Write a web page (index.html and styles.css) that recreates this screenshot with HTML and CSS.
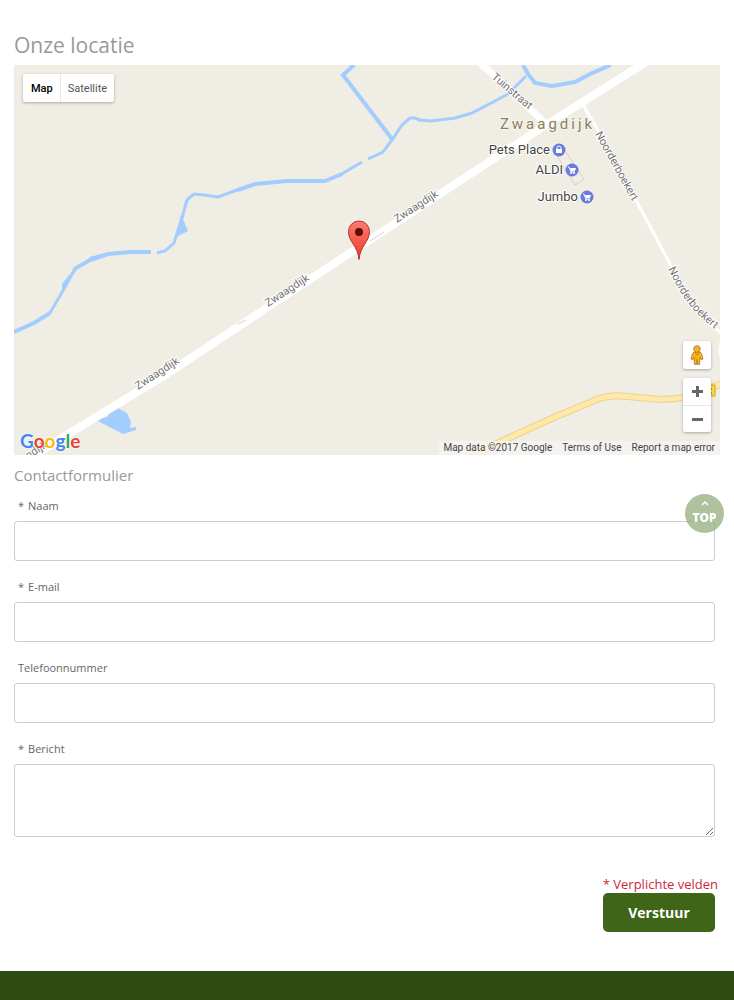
FILE: index.html
```html
<!DOCTYPE html>
<html lang="nl">
<head>
  <meta charset="UTF-8">
  <meta name="viewport" content="width=device-width, initial-scale=1.0">
  <title>Contact</title>
  <link rel="stylesheet" href="styles.css">
</head>
<body>

  <main class="content">
    <h2>Onze locatie</h2>

    <div class="map">
      <svg class="map-canvas" viewBox="14 65 706 390" preserveAspectRatio="xMidYMid slice" role="img" aria-label="Kaart van Zwaagdijk">
        <defs>
          <linearGradient id="pinFill" x1="0" y1="0" x2="0" y2="1">
            <stop offset="0" stop-color="#fc7c70"/>
            <stop offset="1" stop-color="#f0392c"/>
          </linearGradient>
          <path id="noorderCurve" d="M668 269 C679 290 687 308 716 330 L750 354"/>
        </defs>

        <!-- water -->
        <g class="water">
          <path d="M14 332 L34 323 L50 313"/>
          <path class="thin" d="M50 313 L61 294 L75 269"/>
          <path d="M74 270 L76 268 L90 260 L108 254 L130 252 L151 252"/>
          <path class="thin" d="M157 253 L165 251 L174 243 L182 218 L187 200"/>
          <path class="thin" d="M186 203 L188 199 L194 194 L204 195 L218 197 L240 189"/>
          <path d="M238 190 L255 184 L287 181 L325 181 L342 174"/>
          <path class="thin" d="M340 175 L362 162"/>
          <path class="thin" d="M368 159 L383 152 L392 140 L402 125 L410 118 L415 118 L420 120"/>
          <path class="thin" d="M418 120 L431 121 L455 118 L472 113 L495 101 L508 94 L526 76"/>
          <path d="M354 65 L343 75 L392 139"/>
          <path d="M523 65 L528 74 L535 83 L552 86 L575 82 L590 74 L611 65"/>
          <path class="fill" d="M181 214 L188 231 L176 237 Z"/>
          <path class="fill" d="M62 284 L74 269 L62 292 Z"/>
          <path class="fill" d="M89 257 L110 252 L93 261 Z"/>
          <path class="fill" d="M96 420 L107 417 L112 409 L118 408 L127 413 L131 422 L130 428 L136 427 L136 430 L123 434 Z"/>
        </g>

        <!-- roads -->
        <g class="roads">
          <path class="road-main" d="M24 462 L70 433 L165 375 L359 247 L472 173 L546 125 L646 62"/>
          <path class="road-side" d="M478 61 L512 92 L545 123"/>
          <path class="road-small" d="M583 105 L610 151 L646 219 L678 279"/>
          <path class="road-small" d="M678 279 Q692 311 722 334 L720 352 L724 370"/>
          <path class="n-road-edge" d="M470 458 L500 442 L555 417 L598 399 Q610 395 622 396 L655 399 Q676 400 688 396 L726 382"/>
          <path class="n-road" d="M470 458 L500 442 L555 417 L598 399 Q610 395 622 396 L655 399 Q676 400 688 396 L726 382"/>
        </g>
        <path class="building" d="M566 152 L584 179 L575 185 L556 154"/>
        <path class="building" d="M370 241 L384 232 M238 324 L246 320"/>
        <path d="M706 385h9v11h-9z" fill="#ffdc3c" stroke="#c9a61a"/>
        <path d="M711 388v2m0 2v2" stroke="#665500"/>

        <!-- street names -->
        <g class="street">
          <text transform="translate(397 223) rotate(-33)">Zwaagdijk</text>
          <text transform="translate(268 307) rotate(-33)">Zwaagdijk</text>
          <text transform="translate(138 390) rotate(-33)">Zwaagdijk</text>
          <text transform="translate(6 474) rotate(-33)">Zwaagdijk</text>
          <text transform="translate(491 78) rotate(40)">Tuinstraat</text>
          <text transform="translate(595 134) rotate(61)">Noorderboekert</text>
          <text><textPath href="#noorderCurve">Noorderboekert</textPath></text>
        </g>
        <text class="town" x="500" y="129">Zwaagdijk</text>

        <!-- shops -->
        <g class="poi">
          <text x="550" y="154">Pets Place</text>
          <text x="563" y="174">ALDI</text>
          <text x="578" y="201">Jumbo</text>
        </g>
        <g class="poi-icon" transform="translate(559 150)">
          <circle r="6.500"/>
          <path d="M-3 -1h6v4h-6z"/>
          <path class="line" d="M-2 -1v-1a2 2 0 0 1 4 0v1"/>
        </g>
        <g class="poi-icon" transform="translate(572 170)">
          <circle r="6.500"/>
          <path d="M-2 -2h6l-1 3h-4z"/>
          <path class="line" d="M-4 -3h1l2 5h4"/>
          <circle class="wheel" cx="-1" cy="3" r="1"/><circle class="wheel" cx="2" cy="3" r="1"/>
        </g>
        <g class="poi-icon" transform="translate(587 197)">
          <circle r="6.500"/>
          <path d="M-2 -2h6l-1 3h-4z"/>
          <path class="line" d="M-4 -3h1l2 5h4"/>
          <circle class="wheel" cx="-1" cy="3" r="1"/><circle class="wheel" cx="2" cy="3" r="1"/>
        </g>

        <!-- marker -->
        <path d="M359 259.500 C358 246 348.500 242 348.500 231.500 A10.500 10.500 0 0 1 369.500 231.500 C369.500 242 360 246 359 259.500 Z" fill="url(#pinFill)" stroke="#b5342b"/>
        <circle cx="359" cy="232" r="4" fill="#5c0d08"/>
      </svg>

      <div class="map-type">
        <button type="button" class="active">Map</button>
        <button type="button">Satellite</button>
      </div>

      <div class="map-controls">
        <button type="button" class="pegman" aria-label="Street View">
          <svg width="14" height="20" viewBox="0 0 14 20">
            <g fill="#fbb01d" stroke="#a8762a" stroke-width=".8">
              <path d="M4 7h6q2 1 3 7l-2 .5-1-2-.5 7h-2L7 14.500l-.5 5h-2L4 12.500l-1 2L1 14q1-6 3-7z"/>
              <circle cx="7" cy="4" r="3.300"/>
            </g>
            <path d="M5 8l2 2 2-2" fill="none" stroke="#c8821a"/>
          </svg>
        </button>
        <div class="zoom">
          <button type="button" aria-label="Zoom in">
            <svg width="11" height="11" viewBox="0 0 11 11"><path d="M0 5.500h11M5.500 0v11" stroke="#666" stroke-width="3"/></svg>
          </button>
          <button type="button" aria-label="Zoom out">
            <svg width="11" height="11" viewBox="0 0 11 11"><path d="M0 5.500h11" stroke="#666" stroke-width="3"/></svg>
          </button>
        </div>
      </div>

      <a class="google" href="#" aria-label="Google"><span class="blue">G</span><span class="red">o</span><span class="yellow">o</span><span class="blue">g</span><span class="green">l</span><span class="red">e</span></a>

      <div class="map-legal">
        <span>Map data ©2017 Google</span>
        <a href="#">Terms of Use</a>
        <a href="#">Report a map error</a>
      </div>
    </div>

    <h3>Contactformulier</h3>

    <form class="contact-form">
      <div class="field">
        <label for="naam"><span class="star">*</span>Naam</label>
        <input type="text" id="naam" name="naam" required>
      </div>
      <div class="field">
        <label for="email"><span class="star">*</span>E-mail</label>
        <input type="email" id="email" name="email" required>
      </div>
      <div class="field">
        <label for="telefoon">Telefoonnummer</label>
        <input type="tel" id="telefoon" name="telefoon">
      </div>
      <div class="field">
        <label for="bericht"><span class="star">*</span>Bericht</label>
        <textarea id="bericht" name="bericht" required></textarea>
      </div>
      <div class="form-footer">
        <p class="required">* Verplichte velden</p>
        <button type="submit" class="submit">Verstuur</button>
      </div>
    </form>
  </main>

  <footer></footer>

  <a href="#" class="to-top">
    <svg width="8" height="5" viewBox="0 0 8 5"><path d="M1 4l3-3 3 3" fill="none" stroke="#fff" stroke-width="1.500"/></svg>
    TOP
  </a>

</body>
</html>
```

FILE: styles.css
```css
* {
  box-sizing: border-box;
}

body {
  margin: 0;
  min-height: 100vh;
  display: flex;
  flex-direction: column;
  font-family: "Open Sans", sans-serif;
  font-size: 13px;
  color: #666;
  background: #fff;
}

.content {
  padding: 30px 14px 39px;
}

h2,
h3 {
  margin: 0;
  font-weight: 400;
  color: #999;
}

h2 {
  font-size: 21px;
  line-height: 30px;
  margin-bottom: 5px;
}

h3 {
  font-size: 15px;
  line-height: 20px;
  margin: 10px 0 11px;
}

button {
  font-family: inherit;
  border: 0;
  padding: 0;
  cursor: pointer;
}

/* map */
.map {
  position: relative;
  height: 390px;
  overflow: hidden;
  background: #f0ede4;
  font-family: Roboto, sans-serif;
}

.map-canvas {
  display: block;
  width: 100%;
  height: 100%;
}

.water path {
  fill: none;
  stroke: #a3ccff;
  stroke-width: 4;
}

.water .thin {
  stroke-width: 3;
}

.water .fill {
  fill: #a3ccff;
  stroke: none;
}

.roads path {
  fill: none;
  stroke: #fff;
}

.roads .road-main {
  stroke-width: 8;
}

.roads .road-side {
  stroke-width: 7;
}

.roads .road-small {
  stroke-width: 3;
}

.roads .n-road-edge {
  stroke: #ecd193;
  stroke-width: 7;
}

.roads .n-road {
  stroke: #ffe9a9;
  stroke-width: 5;
}

.building {
  fill: none;
  stroke: #d5d1cb;
}

.street text {
  font-size: 11px;
  fill: #737373;
  stroke: #fff;
  stroke-width: 2;
  paint-order: stroke;
}

.town {
  font-size: 15px;
  letter-spacing: 3px;
  fill: #8c8061;
  stroke: #f7f5ef;
  stroke-width: 2;
  paint-order: stroke;
}

.poi text {
  font-size: 13px;
  text-anchor: end;
  fill: #444;
  stroke: #fff;
  stroke-width: 2;
  paint-order: stroke;
}

.poi-icon {
  fill: #fff;
}

.poi-icon circle {
  fill: #6b7ade;
}

.poi-icon .wheel {
  fill: #fff;
}

.poi-icon .line {
  fill: none;
  stroke: #fff;
}

.map-type {
  position: absolute;
  top: 9px;
  left: 9px;
  display: flex;
  border-radius: 2px;
  background: #fff;
  box-shadow: 0 1px 3px rgba(0, 0, 0, 0.3);
}

.map-type button {
  height: 28px;
  padding: 0 7px;
  font-size: 11px;
  color: #565656;
  background: none;
}

.map-type button + button {
  border-left: 1px solid #e8e8e8;
}

.map-type .active {
  padding-left: 8px;
  font-weight: 500;
  color: #000;
}

.map-controls {
  position: absolute;
  right: 9px;
  bottom: 23px;
  width: 28px;
}

.map-controls button {
  display: flex;
  align-items: center;
  justify-content: center;
  width: 100%;
  height: 27px;
  background: none;
}

.map-controls .pegman,
.zoom {
  border-radius: 2px;
  background: #fff;
  box-shadow: 0 1px 3px rgba(0, 0, 0, 0.3);
}

.map-controls .pegman {
  height: 28px;
  margin-bottom: 9px;
}

.zoom button + button {
  border-top: 1px solid #e6e6e6;
}

.google {
  position: absolute;
  left: 6px;
  bottom: 1px;
  font-family: Lato, sans-serif;
  font-size: 19px;
  line-height: 26px;
  text-decoration: none;
  font-weight: 700;
  text-shadow: 0 0 2px #fff, 0 0 2px #fff;
}

.blue { color: #4285f4; }
.red { color: #ea4335; }
.yellow { color: #fbbc05; }
.green { color: #34a853; }

.map-legal {
  position: absolute;
  right: 0;
  bottom: 0;
  display: flex;
  font-size: 10px;
  line-height: 14px;
  color: #444;
  background: rgba(245, 245, 245, 0.7);
}

.map-legal > * {
  padding: 0 5px;
}

.map-legal a {
  color: inherit;
  text-decoration: none;
}

/* form */
.contact-form {
  padding-right: 5px;
}

.field {
  margin-bottom: 16px;
}

.field label {
  display: block;
  padding-left: 4px;
  margin-bottom: 5px;
  font-size: 11px;
  line-height: 20px;
}

.star {
  margin-right: 4px;
}

.field input,
.field textarea {
  display: block;
  width: 100%;
  height: 40px;
  padding: 8px 12px;
  font: inherit;
  border: 1px solid #ccc;
  border-radius: 3px;
  background: #fff;
}

.field textarea {
  height: 73px;
  resize: vertical;
}

.form-footer {
  display: flex;
  flex-direction: column;
  align-items: flex-end;
  padding-top: 22px;
}

.required {
  margin: 0 -3px 0 0;
  line-height: 18px;
  color: #d0263c;
}

.submit {
  width: 112px;
  height: 39px;
  font-size: 14px;
  font-weight: 700;
  color: #fff;
  background: #3f6618;
  border-radius: 5px;
}

footer {
  flex: 1;
  min-height: 29px;
  background: #2e4b12;
}

.to-top {
  position: fixed;
  top: 494px;
  right: 10px;
  display: flex;
  flex-direction: column;
  align-items: center;
  width: 39px;
  height: 39px;
  padding-top: 7px;
  border-radius: 50%;
  font-size: 12px;
  line-height: 24px;
  font-weight: 800;
  color: #fff;
  text-decoration: none;
  background: rgba(148, 173, 126, 0.75);
}

.to-top svg {
  flex: none;
}
```
